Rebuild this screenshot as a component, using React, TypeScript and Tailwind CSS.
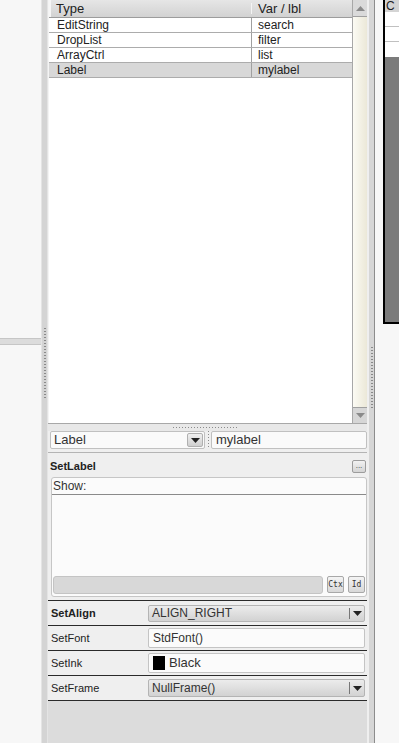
import type { ReactNode } from "react";

const rows = [
  { type: "EditString", v: "search" },
  { type: "DropList", v: "filter" },
  { type: "ArrayCtrl", v: "list" },
  { type: "Label", v: "mylabel", sel: true },
];

function Tri({ light }: { light?: boolean }) {
  return (
    <svg width="9" height="5" viewBox="0 0 9 5">
      <path d="M0 0h9L4.5 5z" fill={light ? "#8a8a8a" : "#222"} />
    </svg>
  );
}

function VDots({ top, len }: { top: number; len: number }) {
  return (
    <div className="flex justify-center" style={{ paddingTop: top }}>
      <div
        className="w-[2px] bg-[repeating-linear-gradient(to_bottom,#8a8a8a_0px,#8a8a8a_1px,transparent_1px,transparent_3px)]"
        style={{ height: len }}
      />
    </div>
  );
}

function Drop({ children, h }: { children: ReactNode; h: string }) {
  return (
    <div
      className={`flex w-[217px] items-stretch rounded-[2px] border border-[#b4b4b4] bg-gradient-to-b from-[#ececec] to-[#d2d2d2] text-[12px] text-[#333] ${h}`}
    >
      <div className="flex flex-1 items-center pl-[3px]">{children}</div>
      <div className="my-[2px] w-px bg-[#777]" />
      <div className="flex w-[14px] items-center justify-center">
        <Tri />
      </div>
    </div>
  );
}

function Input({ children }: { children: ReactNode }) {
  return (
    <div className="flex h-[20px] w-[217px] items-center gap-[4px] rounded-[2px] border border-[#c4c4c4] bg-[#fbfbfb] pl-[4px] text-[12px] text-[#333]">
      {children}
    </div>
  );
}

function Prop({ label, bold, children }: { label: string; bold?: boolean; children: ReactNode }) {
  return (
    <div className="flex h-[25px] items-center border-b border-[#2a2a2a]">
      <div className={`w-[100px] pl-[3px] text-[11px] text-[#222] ${bold ? "font-bold" : ""}`}>{label}</div>
      {children}
    </div>
  );
}

function SmallBtn({ children }: { children: ReactNode }) {
  return (
    <div className="flex h-[17px] w-[17px] items-center justify-center rounded-[2px] border border-[#a8a8a8] bg-gradient-to-b from-[#f4f4f4] to-[#d8d8d8] font-['DejaVu_Sans_Mono',monospace] text-[8px] text-[#333]">
      {children}
    </div>
  );
}

export default function App() {
  return (
    <div className="flex h-[743px] w-[399px] overflow-hidden bg-[#f7f7f7] font-['Liberation_Sans',Arial,sans-serif] text-[#222]">
      {/* left pane */}
      <div className="flex w-[41px] shrink-0 flex-col">
        <div className="h-[338px]" />
        <div className="h-[7px] border-y border-[#c6c6c6] bg-[#dcdcdc]" />
        <div className="flex-1" />
      </div>

      {/* left splitter */}
      <div className="w-[7px] shrink-0 border-x border-[#e4e4e4] bg-[#d4d4d4]">
        <VDots top={328} len={72} />
      </div>

      {/* middle panel */}
      <div className="flex w-[321px] shrink-0 flex-col bg-[#efefef] pr-[2px]">
        {/* list */}
        <div className="flex h-[424px] border-b border-[#a8a8a8] bg-white">
          <div className="flex flex-1 flex-col border-l border-[#f4f4f4]">
            <div className="flex h-[18px] border-b border-[#9c9c9c] bg-gradient-to-b from-[#e6e6e6] to-[#d2d2d2] text-[13px] text-[#222]">
              <div className="flex w-[202px] items-center border-l-2 border-[#f6f6f6] pl-[5px]">Type</div>
              <div className="my-[3px] w-px bg-[#f4f4f4]" />
              <div className="flex items-center pl-[6px]">Var / lbl</div>
            </div>
            {rows.map((r) => (
              <div
                key={r.type}
                className={`flex h-[15px] border-b border-[#acacac] text-[12px] leading-[14px] ${r.sel ? "bg-[#d8d8d8]" : "bg-white"}`}
              >
                <div className="w-[202px] pl-[8px]">{r.type}</div>
                <div className="border-l border-[#a0a0a0] pl-[6px]">{r.v}</div>
              </div>
            ))}
            <div className="flex-1" />
          </div>
          <div className="flex w-[15px] flex-col border-l border-[#a8a8a8]">
            <div className="flex h-[17px] items-center justify-center border-b border-[#a0a0a0] bg-[#dadada]">
              <div className="rotate-180">
                <Tri light />
              </div>
            </div>
            <div className="flex-1 bg-gradient-to-r from-[#fcfbf4] to-[#ebe8d8]" />
            <div className="flex h-[16px] items-center justify-center border-t border-[#a0a0a0] bg-[#d6d6d6]">
              <Tri light />
            </div>
          </div>
        </div>

        {/* horizontal splitter */}
        <div className="flex h-[7px] items-center bg-[#e8e8e8] pl-[125px]">
          <div className="h-px w-[64px] bg-[repeating-linear-gradient(to_right,#8a8a8a_0px,#8a8a8a_1px,transparent_1px,transparent_3px)]" />
        </div>

        {/* type selector row */}
        <div className="flex h-[18px] items-stretch pl-[2px]">
          <div className="flex w-[155px] items-stretch rounded-[2px] border border-[#c0c0c0] bg-[#fafafa] text-[13px] text-[#333]">
            <div className="flex flex-1 items-center pl-[3px]">Label</div>
            <div className="m-[1px] flex w-[16px] items-center justify-center rounded-[2px] border border-[#b0b0b0] bg-gradient-to-b from-[#f0f0f0] to-[#cfcfcf]">
              <Tri />
            </div>
          </div>
          <div className="flex w-[6px] justify-center">
            <div className="w-px bg-[repeating-linear-gradient(to_bottom,#8a8a8a_0px,#8a8a8a_1px,transparent_1px,transparent_3px)]" />
          </div>
          <div className="flex w-[156px] items-center rounded-[2px] border border-[#c0c0c0] bg-[#fafafa] pl-[4px] text-[13px] text-[#333]">
            mylabel
          </div>
        </div>

        <div className="h-[4px] border-b border-[#b4b4b4]" />

        {/* SetLabel section */}
        <div className="flex h-[148px] flex-col border-b border-[#2a2a2a]">
          <div className="flex h-[24px] items-center justify-between pl-[2px] pr-[1px] pt-[2px]">
            <span className="text-[11px] font-bold">SetLabel</span>
            <div className="flex h-[13px] w-[14px] items-end justify-center rounded-[2px] border border-[#9c9c9c] bg-gradient-to-b from-[#f2f2f2] to-[#d4d4d4] pb-[2px] text-[8px] leading-none text-[#333]">
              ...
            </div>
          </div>
          <div className="ml-[3px] flex h-[120px] flex-col rounded-[3px] border border-[#c6c6c6] bg-[#fbfbfb]">
            <div className="h-[17px] border-b border-[#8a8a8a] pl-[1px] text-[12px] leading-[16px] text-[#333]">Show:</div>
            <div className="flex-1" />
            <div className="mb-[2px] flex h-[18px] items-stretch gap-[4px] px-[1px]">
              <div className="flex-1 rounded-[3px] border border-[#c4c4c4] bg-[#d8d8d8]" />
              <SmallBtn>Ctx</SmallBtn>
              <SmallBtn>Id</SmallBtn>
            </div>
          </div>
          <div className="flex-1" />
        </div>

        {/* properties */}
        <Prop label="SetAlign" bold>
          <Drop h="h-[17px]">ALIGN_RIGHT</Drop>
        </Prop>
        <Prop label="SetFont">
          <Input>StdFont()</Input>
        </Prop>
        <Prop label="SetInk">
          <Input>
            <div className="h-[14px] w-[12px] bg-black" />
            <span className="text-[13px]">Black</span>
          </Input>
        </Prop>
        <Prop label="SetFrame">
          <Drop h="h-[18px]">NullFrame()</Drop>
        </Prop>

        <div className="flex-1 bg-[#dcdcdc]" />
      </div>

      {/* right splitter */}
      <div className="w-[6px] shrink-0 border-r border-[#8c8c8c] bg-[#d6d6d6]">
        <VDots top={347} len={62} />
      </div>

      {/* right pane */}
      <div className="w-[24px] shrink-0 pl-[8px]">
        <div className="flex h-[324px] flex-col overflow-hidden border-b-2 border-l-2 border-black">
          <div className="h-[12px] bg-[#d4d4d4] pl-[1px] text-[12px] leading-[12px]">C</div>
          <div className="h-[15px] border-b border-[#c0c0c0] bg-white" />
          <div className="h-[15px] border-b border-[#c0c0c0] bg-white" />
          <div className="h-[15px] bg-white" />
          <div className="flex-1 bg-[#7b7b7b]" />
        </div>
      </div>
    </div>
  );
}
